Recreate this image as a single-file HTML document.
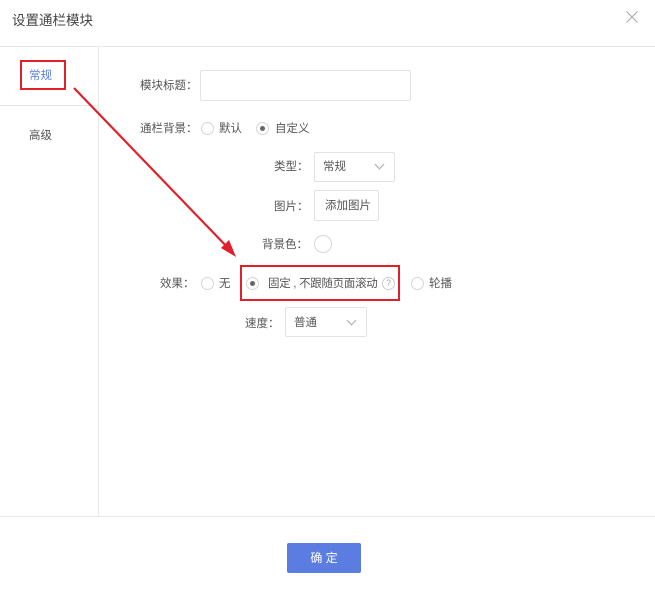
<!DOCTYPE html>
<html><head><meta charset="utf-8"><style>
*{margin:0;padding:0;box-sizing:border-box}
body{width:655px;height:593px;background:#fff;font-family:"Liberation Sans","Noto Sans CJK SC",sans-serif;font-size:11.5px;color:#555;position:relative;overflow:hidden}
.a{position:absolute;white-space:nowrap}
.box{position:absolute;border:1px solid #e3e3e3;border-radius:2px;background:#fff}
.r{position:absolute;width:13px;height:13px;border:1px solid #d6d6d6;border-radius:50%;background:#fff}
.r.on::after{content:"";position:absolute;left:3px;top:3px;width:5px;height:5px;border-radius:50%;background:#666}
.chev{position:absolute;width:7px;height:7px;border-right:1px solid #aaa;border-bottom:1px solid #aaa;transform:rotate(45deg)}
</style></head><body>
<div class="a" style="left:12px;top:9px;font-size:13.5px;color:#444">设置通栏模块</div>
<svg class="a" style="left:626px;top:11px" width="12" height="12"><path d="M0.5 0.5L11.5 11.5M11.5 0.5L0.5 11.5" stroke="#aaa" stroke-width="1"/></svg>
<div class="a" style="left:0;top:46px;width:655px;height:1px;background:#e8e8e8"></div>
<div class="a" style="left:98px;top:47px;width:1px;height:469px;background:#e8e8e8"></div>
<div class="a" style="left:0;top:105px;width:98px;height:1px;background:#e8e8e8"></div>
<div class="a" style="left:29px;top:67px;color:#5b7ce0">常规</div>
<div class="a" style="left:20px;top:60px;width:46px;height:30px;border:2px solid #e0202a"></div>
<div class="a" style="left:29px;top:127px">高级</div>
<div class="a" style="left:0;top:516px;width:655px;height:1px;background:#e8e8e8"></div>
<div class="a" style="left:287px;top:543px;width:74px;height:30px;background:#5b7ce0;border-radius:2px;color:#fff;text-align:center;line-height:30px;font-size:12px">确 定</div>

<div class="a" style="left:140px;top:77px">模块标题：</div>
<div class="box" style="left:200px;top:70px;width:211px;height:31px"></div>
<div class="a" style="left:140px;top:120px">通栏背景：</div>
<div class="r" style="left:201px;top:122px"></div><div class="a" style="left:219px;top:120px">默认</div>
<div class="r on" style="left:256px;top:122px"></div><div class="a" style="left:275px;top:120px">自定义</div>
<div class="a" style="left:274px;top:158px">类型：</div>
<div class="box" style="left:314px;top:152px;width:81px;height:30px"></div>
<div class="a" style="left:323px;top:158px">常规</div><div class="chev" style="left:376px;top:161px"></div>
<div class="a" style="left:274px;top:198px">图片：</div>
<div class="box" style="left:314px;top:190px;width:65px;height:31px"></div>
<div class="a" style="left:325px;top:197px">添加图片</div>
<div class="a" style="left:262px;top:236px">背景色：</div>
<div class="a" style="left:314px;top:235px;width:18px;height:18px;border:1px solid #d6d6d6;border-radius:50%"></div>
<div class="a" style="left:160px;top:275px">效果：</div>
<div class="r" style="left:201px;top:277px"></div><div class="a" style="left:219px;top:275px">无</div>
<div class="r on" style="left:246px;top:277px"></div><div class="a" style="left:268px;top:275px;letter-spacing:-0.3px">固定 , 不跟随页面滚动</div>
<div class="a" style="left:382px;top:277px;width:13px;height:13px;border:1px solid #ccc;border-radius:50%;font-size:9px;color:#aaa;text-align:center;line-height:11px">?</div>
<div class="r" style="left:411px;top:277px"></div><div class="a" style="left:429px;top:275px">轮播</div>
<div class="a" style="left:240px;top:265px;width:160px;height:36px;border:2px solid #e0202a"></div>
<div class="a" style="left:245px;top:315px">速度：</div>
<div class="box" style="left:285px;top:307px;width:82px;height:30px"></div>
<div class="a" style="left:294px;top:314px">普通</div><div class="chev" style="left:348px;top:317px"></div>
<svg class="a" style="left:0;top:0" width="655" height="593"><path d="M74 88L231 251" stroke="#e0202a" stroke-width="2.2"/><path d="M236 257L221 248L229 240Z" fill="#e0202a"/></svg>
</body></html>
